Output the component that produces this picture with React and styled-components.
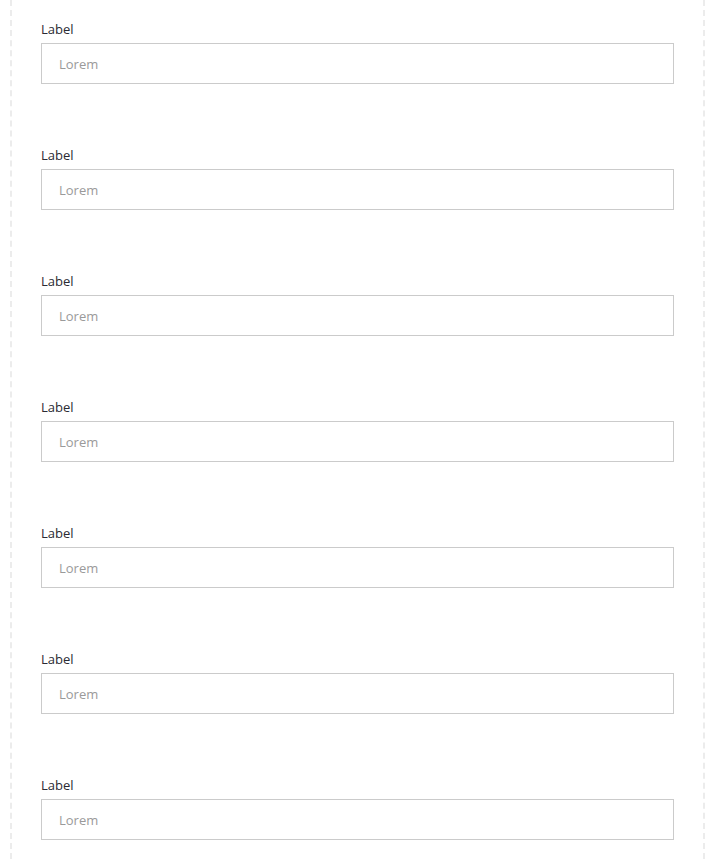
import React from "react";
import styled, { createGlobalStyle } from "styled-components";

const Global = createGlobalStyle`
  html, body { margin: 0; padding: 0; background: #fff; }
  body { font-family: "Open Sans", "Noto Sans", Arial, sans-serif; }
`;

const Page = styled.div`
  margin: 0 8px 0 10px;
  border-left: 2px dashed #ececec;
  border-right: 2px dashed #ececec;
  padding: 20px 29px 0;
  min-height: 859px;
  box-sizing: border-box;
`;

const Form = styled.form`
  display: flex;
  flex-direction: column;
  gap: 62px;
`;

const Field = styled.div`
  display: flex;
  flex-direction: column;
  gap: 5px;
`;

const Label = styled.label`
  font-size: 13px;
  line-height: 18px;
  color: #2a2a33;
`;

const Input = styled.input`
  box-sizing: border-box;
  height: 41px;
  width: 100%;
  border: 1px solid #cbcbcb;
  border-radius: 0;
  padding: 0 17px;
  font-family: inherit;
  font-size: 13px;
  color: #333;
  background: #fff;
  outline: none;
  &::placeholder { color: #9a9a9a; }
`;

export default function App() {
  const fields = Array.from({ length: 7 }, (_, i) => i);
  return (
    <>
      <Global />
      <Page>
        <Form>
          {fields.map((i) => (
            <Field key={i}>
              <Label htmlFor={`f${i}`}>Label</Label>
              <Input id={`f${i}`} placeholder="Lorem" />
            </Field>
          ))}
        </Form>
      </Page>
    </>
  );
}
